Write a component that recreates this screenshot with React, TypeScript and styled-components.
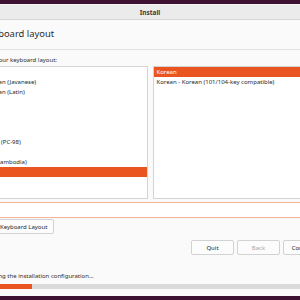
import React from 'react'
import styled, { createGlobalStyle } from 'styled-components'

// the installer window is wider than the shot; it is cut off on both sides
const OFFSET = 44;
const WIDTH = 300 + OFFSET * 2;

const GlobalStyle = createGlobalStyle`
  html, body {
    margin: 0;
    padding: 0;
    background: #3c1131;
  }
  body {
    font-family: "Noto Sans", "DejaVu Sans", sans-serif;
    color: #333;
  }
  * { box-sizing: border-box; }
`;

const layouts = [
	'Indian',
	'Indonesian (Javanese)',
	'Indonesian (Latin)',
	'Iraqi',
	'Irish',
	'Italian',
	'Japanese',
	'Japanese (PC-98)',
	'Kazakh',
	'Khmer (Cambodia)',
	'Korean',
];

const variants = [
	'Korean',
	'Korean - Korean (101/104-key compatible)',
];

const App = () => (
	<>
		<GlobalStyle />
		<Screen>
			<Window>
				<TitleBar>Install</TitleBar>
				<Content>
					<Heading>Keyboard layout</Heading>
					<Separator />
					<Label>Choose your keyboard layout:</Label>
					<Lists>
						<ListBox>
							{layouts.map(name => (
								<Row key={name} selected={name === 'Korean'} indent={5}>{name}</Row>
							))}
						</ListBox>
						<ListBox>
							{variants.map((name, i) => (
								<Row key={name} selected={i === 0} indent={3}>{name}</Row>
							))}
						</ListBox>
					</Lists>
					<TestEntry />
					<DetectRow>
						<Button>Detect Keyboard Layout</Button>
					</DetectRow>
					<Actions>
						<Button>Quit</Button>
						<Button disabled>Back</Button>
						<Button>Continue</Button>
					</Actions>
					<Status>Loading the installation configuration...</Status>
					<Progress>
						<ProgressFill style={{ width: '17.6%' }} />
					</Progress>
				</Content>
			</Window>
		</Screen>
	</>
);

export default App;

const Screen = styled.div`
	width: 300px;
	height: 300px;
	overflow: hidden;
	background: #3c1131;
	padding-top: 4px;
`;

const Window = styled.div`
	width: ${WIDTH}px;
	margin-left: -${OFFSET}px;
	height: 292px;
	background: #fafafa;
	border-top: 1px solid #f4f4f4;
	display: flex;
	flex-direction: column;
`;

const TitleBar = styled.div`
	height: 15px;
	background: #ebebeb;
	border-bottom: 1px solid #d6d6d6;
	font-size: 6.5px;
	font-weight: 700;
	color: #3a3a3a;
	display: flex;
	align-items: center;
	justify-content: center;
`;

const Content = styled.div`
	flex: 1;
	display: flex;
	flex-direction: column;
	padding: 0 12px;
`;

const Heading = styled.div`
	margin-top: 7px;
	margin-left: 14.5px;
	font-size: 9.4px;
	line-height: 14px;
	color: #2c2c2c;
`;

const Separator = styled.div`
	margin: 8px -12px 0;
	height: 1px;
	background: #e2e2e2;
`;

const Label = styled.div`
	margin-top: 6px;
	margin-left: 5px;
	font-size: 6px;
	line-height: 8px;
	color: #2e2e2e;
`;

const Lists = styled.div`
	margin-top: 2px;
	height: 133px;
	display: grid;
	grid-template-columns: 1fr 1fr;
	gap: 5px;
`;

const ListBox = styled.div`
	background: #fff;
	border: 1px solid #d4d4d4;
	overflow: hidden;
`;

const Row = styled.div<{ selected?: boolean; indent: number }>`
	height: 10px;
	line-height: 10px;
	padding-left: ${p => p.indent}px;
	font-size: 6px;
	white-space: nowrap;
	color: ${p => (p.selected ? '#fff' : '#262626')};
	background: ${p => (p.selected ? '#e95420' : 'transparent')};
`;

const TestEntry = styled.div`
	margin-top: 3px;
	height: 16px;
	background: #fff;
	border: 1px solid #f1b29a;
`;

const DetectRow = styled.div`
	margin-top: 1px;
	padding-left: 5px;
	display: flex;
`;

const Button = styled.button`
	height: 15px;
	min-width: 43px;
	padding: 0 6px;
	background: #fcfcfc;
	border: 1px solid #d2d2d2;
	border-radius: 2px;
	font-family: inherit;
	font-size: 6px;
	color: #262626;

	&:disabled {
		color: #a8a8a8;
	}
`;

const Actions = styled.div`
	margin-top: 6px;
	margin-right: 6px;
	display: flex;
	justify-content: flex-end;
	gap: 3px;
`;

const Status = styled.div`
	margin-top: 17px;
	margin-left: 15px;
	font-size: 6px;
	line-height: 8px;
	color: #2e2e2e;
`;

const Progress = styled.div`
	margin-top: 4px;
	height: 5px;
	background: #dadada;
`;

const ProgressFill = styled.div`
	height: 100%;
	background: #e95420;
`;
